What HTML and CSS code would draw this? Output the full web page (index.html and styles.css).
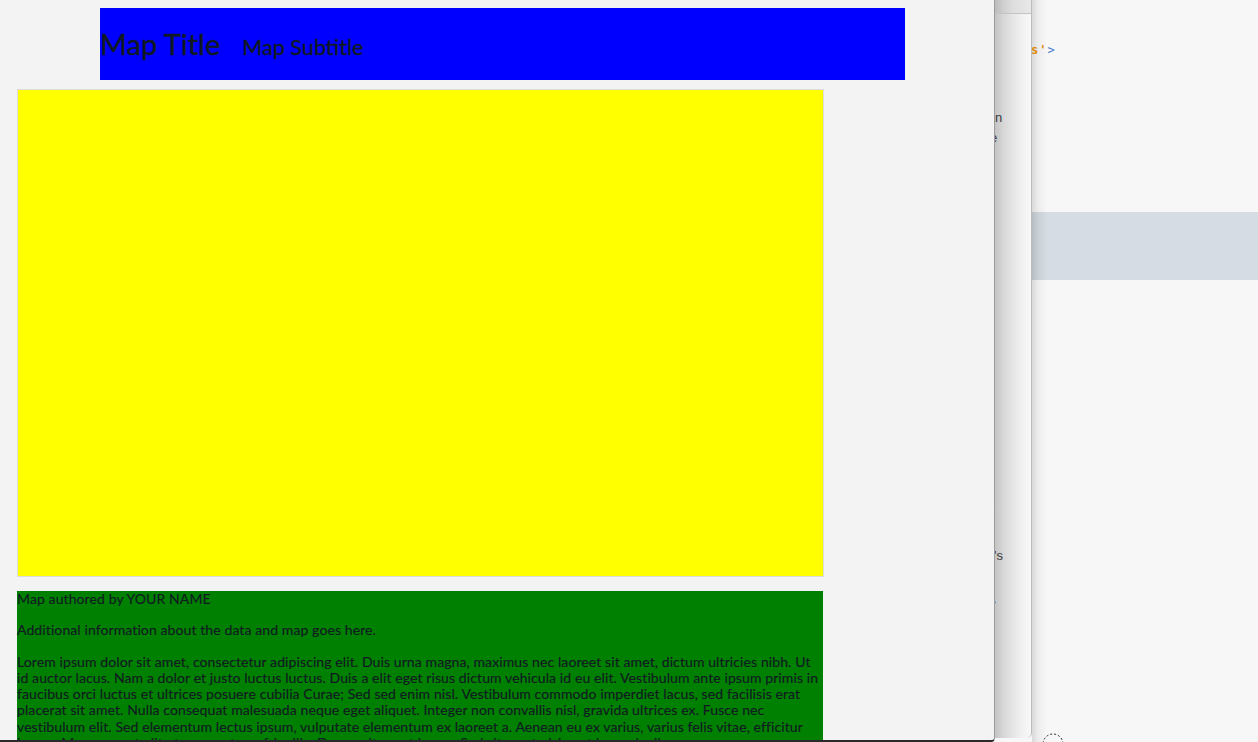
FILE: index.html
```html
<!DOCTYPE html>
<html>
<head>
<meta charset="utf-8">
<link rel="stylesheet" href="styles.css">
</head>
<body>
<div class="desktop">
  <div class="win">
    <header class="map-header">
      <h1 class="title">Map Title</h1>
      <h2 class="subtitle">Map Subtitle</h2>
    </header>
    <div class="map"></div>
    <div class="info">
      <p>Map authored by YOUR NAME</p>
      <p>Additional information about the data and map goes here.</p>
      <p>Lorem ipsum dolor sit amet, consectetur adipiscing elit. Duis urna magna, maximus nec laoreet sit amet, dictum ultricies nibh. Ut id auctor lacus. Nam a dolor et justo luctus luctus. Duis a elit eget risus dictum vehicula id eu elit. Vestibulum ante ipsum primis in faucibus orci luctus et ultrices posuere cubilia Curae; Sed sed enim nisl. Vestibulum commodo imperdiet lacus, sed facilisis erat placerat sit amet. Nulla consequat malesuada neque eget aliquet. Integer non convallis nisl, gravida ultrices ex. Fusce nec vestibulum elit. Sed elementum lectus ipsum, vulputate elementum ex laoreet a. Aenean eu ex varius, varius felis vitae, efficitur ipsum. Maecenas at elit et nunc rutrum fringilla. Donec vitae est lorem. Sed sit amet nisi eget lacus dapibus posuere.</p>
    </div>
  </div>
  <div class="strip">
    <div class="strip-bar"></div>
    <div class="frag frag-in">in</div>
    <div class="frag frag-e">e</div>
    <div class="frag frag-s">'s</div>
    <div class="frag frag-dot">.</div>
  </div>
  <div class="pane">
    <div class="code"><span class="str">s'</span><span class="tag">&gt;</span></div>
    <div class="band"></div>
    <svg class="cursor" width="24" height="12" viewBox="0 0 24 12"><circle cx="11" cy="12" r="10" fill="none" stroke="#222" stroke-width="1" stroke-dasharray="2 2"/></svg>
  </div>
</div>
</body>
</html>
```

FILE: styles.css
```css
html, body {
  margin: 0;
  padding: 0;
  width: 1258px;
  height: 742px;
  overflow: hidden;
  background: #f7f7f7;
}

.desktop {
  display: flex;
  height: 742px;
  align-items: flex-start;
}

.win {
  position: relative;
  z-index: 2;
  width: 995px;
  height: 742px;
  flex: none;
  box-sizing: border-box;
  background: #f3f3f3;
  border-right: 1px solid #9c9c9c;
  border-bottom: 2px solid #2a2a2a;
  border-bottom-right-radius: 4px;
  overflow: hidden;
  padding-top: 8px;
  font-family: Lato, "Open Sans", sans-serif;
  color: #111a22;
}

.map-header {
  margin-left: 100px;
  width: 805px;
  height: 72px;
  box-sizing: border-box;
  background: #0000ff;
  display: flex;
  align-items: baseline;
  gap: 22px;
  padding-top: 18px;
}

.title {
  margin: 0;
  font-size: 29px;
  font-weight: 400;
  -webkit-text-stroke: 0.35px #111a22;
}

.subtitle {
  margin: 0;
  font-size: 21.6px;
  font-weight: 400;
  -webkit-text-stroke: 0.35px #111a22;
}

.map {
  margin: 9px 0 0 17px;
  width: 805px;
  height: 486px;
  background: #ffff00;
  border: 1px solid #dcdcdc;
}

.info {
  margin: 0 0 0 17px;
  width: 806px;
  background: #008000;
  font-size: 14px;
  line-height: 16.3px;
  letter-spacing: 0.1px;
  -webkit-text-stroke: 0.15px #111a22;
}

.info p {
  margin: 15px 0;
}

.info p:first-child {
  margin-top: 14px;
}

.strip {
  position: relative;
  z-index: 1;
  width: 36px;
  height: 738px;
  flex: none;
  background: linear-gradient(to right, #c4c4c4 0, #d6d6d6 8px, #e6e6e6 18px, #f2f2f2 28px, #f8f8f8 36px);
  border-right: 1px solid #bcbcbc;
  border-bottom-right-radius: 5px;
  overflow: hidden;
  font-family: "Liberation Sans", Arial, sans-serif;
  font-size: 13px;
  color: #3a3a3a;
}

.strip-bar {
  height: 13px;
  border-bottom: 1px solid #c4c4c4;
  background: linear-gradient(to right, #bcbcbc 0, #cecece 8px, #dedede 18px, #e8e8e8 36px);
}

.frag {
  height: 16px;
  line-height: 16px;
}

.frag-in {
  margin: 96px 0 0 -3px;
}

.frag-e {
  margin: 4px 0 0 -5px;
}

.frag-s {
  margin: 402px 0 0 -1px;
}

.frag-dot {
  margin: 27px 0 0 -2px;
}

.pane {
  position: relative;
  flex: 1;
  height: 742px;
  background: linear-gradient(to right, #d9d9d9 0, #ececec 6px, #f7f7f7 15px);
  overflow: hidden;
}

.code {
  margin-top: 42px;
  margin-left: -1px;
  height: 16px;
  line-height: 16px;
  font-family: "DejaVu Sans Mono", monospace;
  font-size: 12px;
  font-weight: bold;
  letter-spacing: 1px;
}

.str {
  color: #e08a0a;
}

.tag {
  color: #4b7fd1;
  font-weight: normal;
}

.band {
  margin-top: 154px;
  height: 68px;
  background: linear-gradient(to right, #b7bfc5 0, #c8d0d6 6px, #d5dce3 15px);
}

.cursor {
  position: absolute;
  left: 10px;
  top: 732px;
}
```
